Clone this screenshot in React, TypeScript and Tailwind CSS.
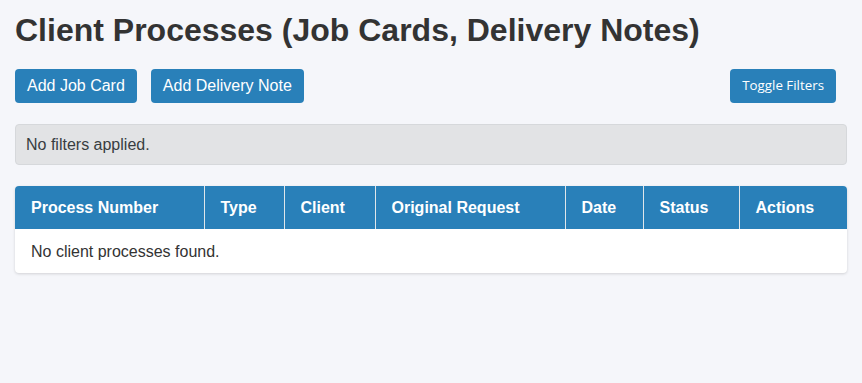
import React from "react";

const columns = [
  { label: "Process Number", width: "w-[189px]" },
  { label: "Type", width: "w-[80px]" },
  { label: "Client", width: "w-[91px]" },
  { label: "Original Request", width: "w-[190px]" },
  { label: "Date", width: "w-[78px]" },
  { label: "Status", width: "w-[96px]" },
  { label: "Actions", width: "w-[108px]" },
];

const App: React.FC = () => {
  return (
    <div className="min-h-[383px] bg-[#f5f6fa] px-[15px] pt-[11px] font-['Liberation_Sans',Arial,sans-serif] text-[#333]">
      {/* Title */}
      <h1 className="text-[32px] leading-[38px] font-bold text-[#333]">
        Client Processes (Job Cards, Delivery Notes)
      </h1>

      {/* Actions row */}
      <div className="mt-[20px] flex items-center justify-between">
        <div className="flex gap-[14px]">
          <button className="h-[34px] rounded-[4px] bg-[#2980b9] px-[12px] text-[16px] text-white">
            Add Job Card
          </button>
          <button className="h-[34px] rounded-[4px] bg-[#2980b9] px-[12px] text-[16px] text-white">
            Add Delivery Note
          </button>
        </div>
        <button className="mr-[11px] h-[34px] rounded-[4px] bg-[#2980b9] px-[12px] font-['Open_Sans','Noto_Sans',sans-serif] text-[13.33px] text-white">
          Toggle Filters
        </button>
      </div>

      {/* Filters summary */}
      <div className="mt-[21px] rounded-[4px] border border-[#d6d8db] bg-[#e2e3e5] px-[10px] py-[10px] text-[16px] leading-[19px] text-[#383d41]">
        No filters applied.
      </div>

      {/* Table */}
      <div className="mt-[21px] overflow-hidden rounded-[4px] bg-white shadow-[0_1px_3px_rgba(0,0,0,0.15)]">
        <table className="w-full table-fixed border-collapse">
          <thead>
            <tr className="bg-[#2980b9]">
              {columns.map((c, i) => (
                <th
                  key={c.label}
                  className={`${c.width} h-[43px] px-[16px] text-left text-[16px] leading-[19px] font-bold text-white ${
                    i < columns.length - 1 ? "border-r border-[#e0e6ea]" : ""
                  }`}
                >
                  {c.label}
                </th>
              ))}
            </tr>
          </thead>
          <tbody>
            <tr>
              <td colSpan={7} className="h-[44px] px-[16px] text-[16px] leading-[19px] text-[#333]">
                No client processes found.
              </td>
            </tr>
          </tbody>
        </table>
      </div>
    </div>
  );
};

export default App;
